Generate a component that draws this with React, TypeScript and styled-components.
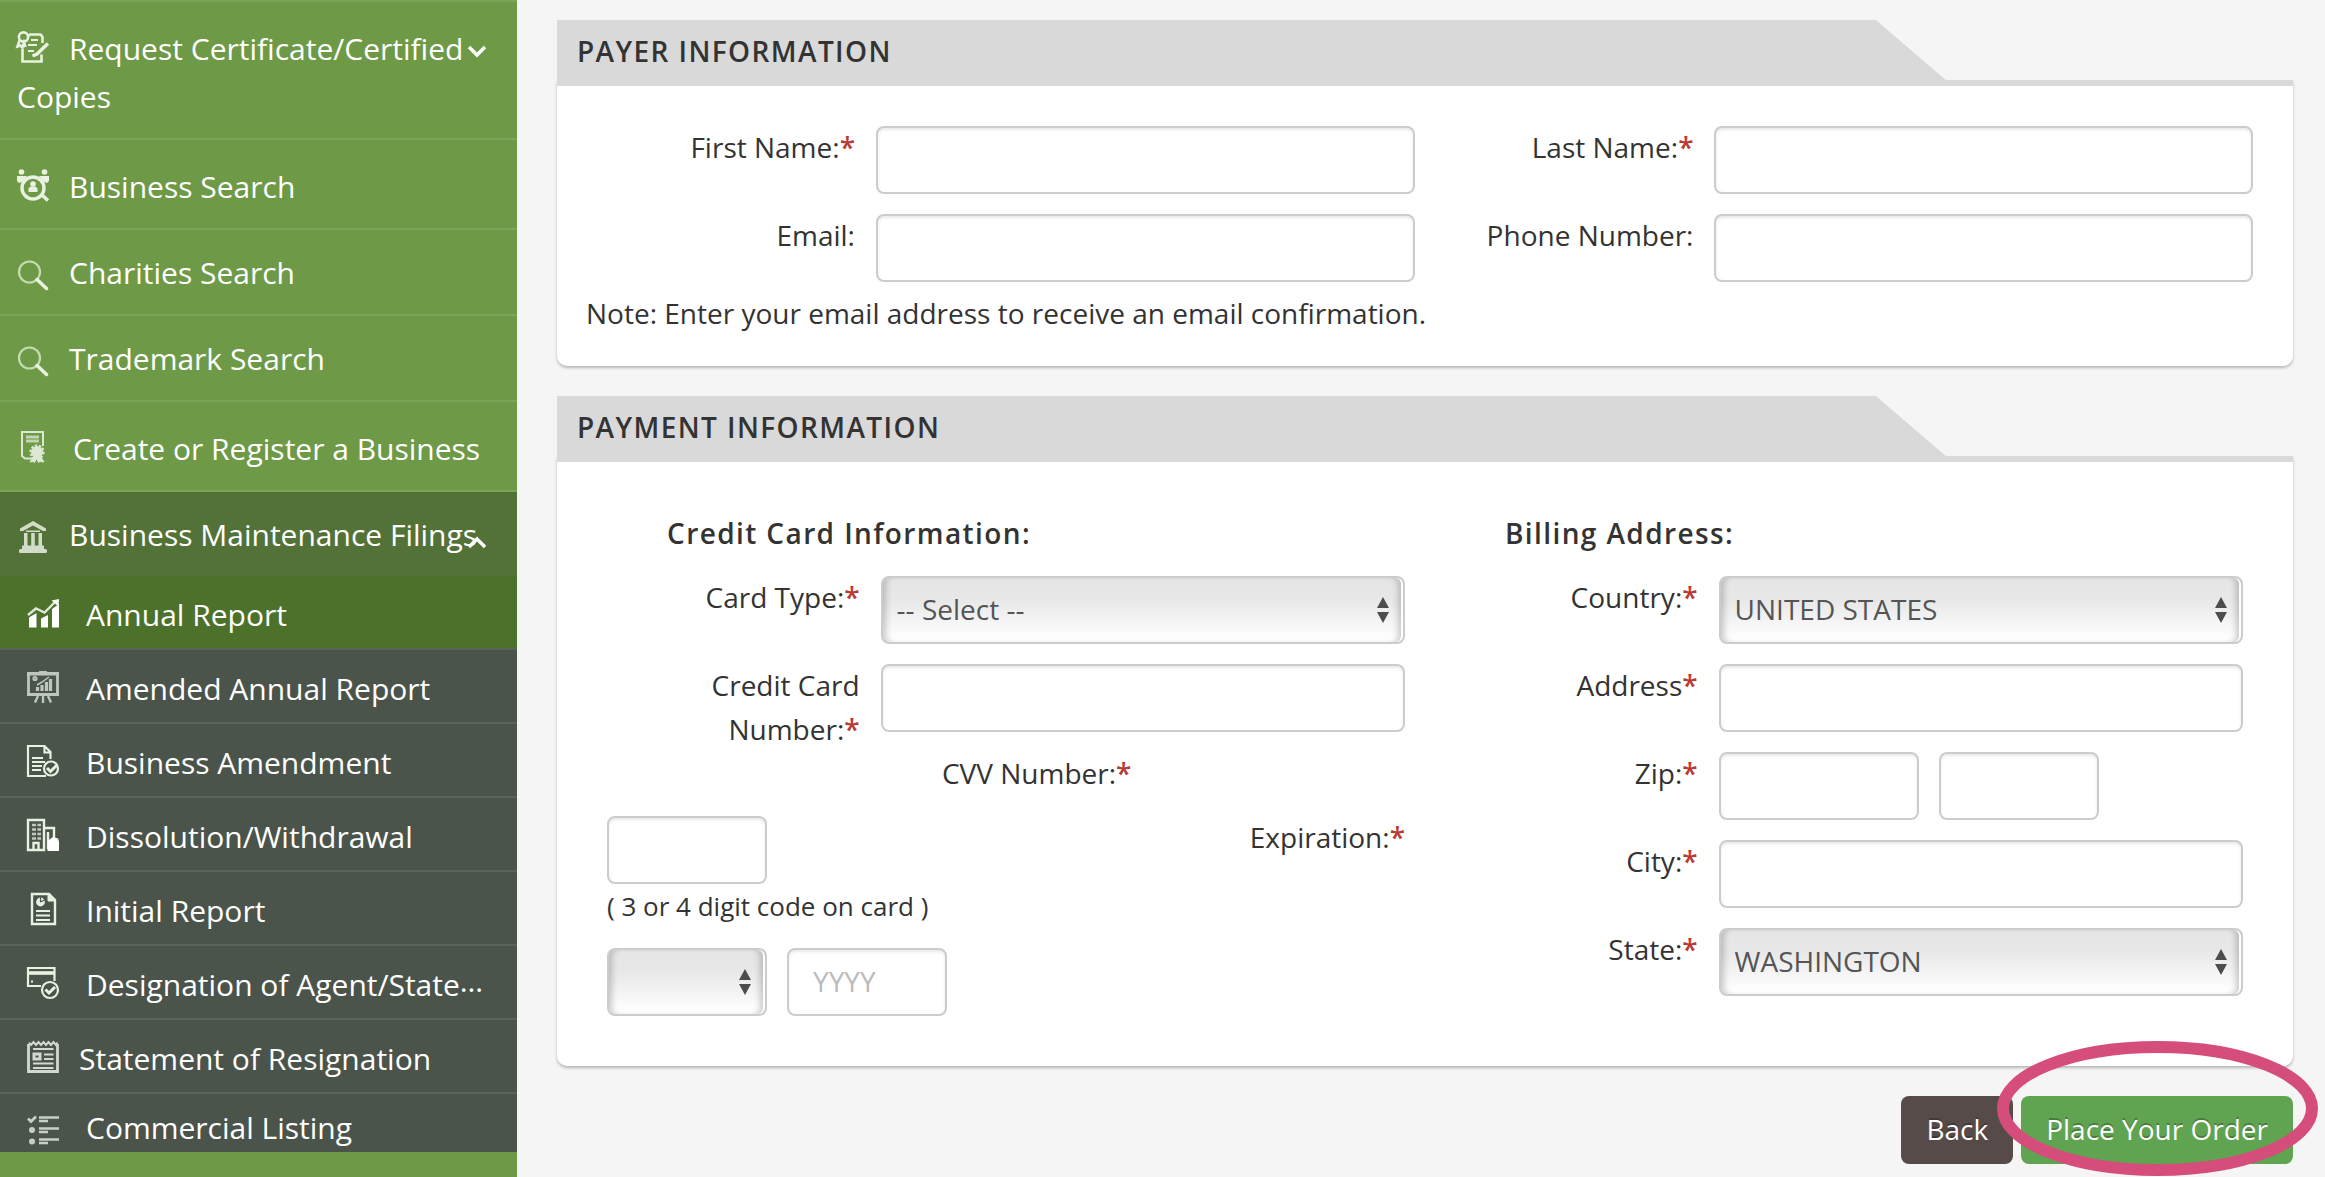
import React from 'react';
import styled, { createGlobalStyle, css } from 'styled-components';

const GlobalStyle = createGlobalStyle`
  *, *::before, *::after { box-sizing: border-box; }
  body {
    margin: 0;
    background: #f5f5f5;
    color: #333;
    font-family: 'Open Sans', 'Noto Sans', sans-serif;
    font-size: 28px;
    line-height: 44px;
  }
`;

/* ---------- Page shell ---------- */

const Page = styled.div`
  display: flex;
  min-height: 100vh;
`;

const Sidebar = styled.nav`
  flex: 0 0 517px;
  background: #6e9a47;
  border-top: 2px solid #7aa456;
`;

const Main = styled.main`
  flex: 1;
  min-width: 0;
  padding: 20px 32px 12px 40px;
`;

/* ---------- Sidebar menu ---------- */

const Menu = styled.ul`
  list-style: none;
  margin: 0;
  padding: 0;
`;

const SubMenu = styled(Menu)`
  background: #4b544b;
`;

const MenuIcon = styled.svg<{ $gap: number; $low?: boolean }>`
  display: inline-block;
  width: 32px;
  height: 32px;
  margin-right: ${(p) => p.$gap}px;
  vertical-align: ${(p) => (p.$low ? '-7px' : '-3px')};
  overflow: visible;
  color: #e9f1e0;
`;

const itemText = css`
  display: block;
  color: #fff;
  font-size: 30px;
  line-height: 48px;
  text-decoration: none;
`;

const MenuLink = styled.a<{ $tall?: boolean; $open?: boolean }>`
  ${itemText}
  position: relative;
  padding: ${(p) => (p.$tall ? '23px' : '19px')} 16px 17px 17px;
  background: ${(p) => (p.$open ? '#537238' : 'transparent')};
  border-bottom: ${(p) => (p.$open ? '0' : '2px solid #7aa456')};
`;

const SubLink = styled.a<{ $current?: boolean; $last?: boolean }>`
  ${itemText}
  padding: ${(p) => (p.$last ? '10px 16px 0 27px' : '15px 16px 9px 27px')};
  background: ${(p) => (p.$current ? '#4c712a' : 'transparent')};
  border-bottom: ${(p) => (p.$last ? '0' : '2px solid #5c655d')};
  white-space: nowrap;
`;

const Chevron = styled.svg<{ $top: number }>`
  position: absolute;
  top: ${(p) => p.$top}px;
  right: 30px;
  width: 20px;
  height: 14px;
`;

const Ellipsis = styled.span`
  vertical-align: 4px;
  line-height: 1;
`;

type IconName =
  | 'request' | 'people' | 'search' | 'certificate' | 'bank' | 'chart' | 'board'
  | 'docCheck' | 'buildings' | 'report' | 'cardCheck' | 'notepad' | 'checklist';

const drawings: Record<IconName, React.ReactNode> = {
  request: (
    <g fill="none" stroke="currentColor" strokeWidth="2.600">
      <circle cx="6.5" cy="6" r="4.6" />
      <path d="M2.5 9.5 0.5 15.5l3-1 2 2 1.500-5 1.500 4.500" />
      <path d="M12 3.500h11.500l2 2.500v6M12 3.500v2M5.500 18v12.500h19v-7" />
      <path d="M14 9h7M11 14h9M11 20h6" strokeWidth="2.200" />
      <path d="M31 12.500 20 23l-4.500 2" strokeWidth="3.400" />
    </g>
  ),
  people: (
    <g>
      <g fill="currentColor">
        <circle cx="4.500" cy="3" r="2.800" />
        <circle cx="27.500" cy="3" r="2.800" />
        <path d="M0 7h10l-5 6-3 1-2-2zM32 7H22l5 6 3 1 2-2z" />
        <circle cx="16" cy="15" r="2.800" />
        <path d="M11.500 23v-3.500l2-2h5l2 2V23z" />
      </g>
      <circle cx="16" cy="19" r="11" fill="none" stroke="currentColor" strokeWidth="3.400" />
      <path d="m25 26 6 5.500" stroke="currentColor" strokeWidth="3.500" />
    </g>
  ),
  search: (
    <g fill="none" stroke="#c5dcb2">
      <circle cx="12.500" cy="13" r="10.500" strokeWidth="2.200" />
      <path d="m20 20.500 9.500 9" strokeWidth="3.500" stroke="currentColor" strokeLinecap="round" />
    </g>
  ),
  certificate: (
    <g fill="none" stroke="currentColor" strokeWidth="2" opacity="0.9">
      <path d="M17 27.500H8l-3-2.500V1h21v14" />
      <path d="M9 6h13M9 10h13" strokeWidth="2.800" opacity="0.75" />
      <circle cx="20" cy="21" r="6" fill="currentColor" stroke="none" />
      <circle cx="20" cy="21" r="6.600" strokeDasharray="2.500 1.600" />
      <path d="m16 26-3 5 3-.5 1.500 1 2-4 2 4 1.500-1 4 .5-3-5" fill="currentColor" strokeWidth="1" />
    </g>
  ),
  bank: (
    <g fill="#d3dcc9">
      <path d="M16 0 3 7.500V10h3l10-5.500L26 10h3V7.500z" />
      <path d="M9 9.500h14v1.500H9zM7 12h3.500v13H7zM14.200 12h3.600v13h-3.600zM21.500 12H25v13h-3.500z" />
      <path d="M5 24.500h22V28H5z" />
      <rect x="2" y="28" width="28" height="4" rx="1.500" />
    </g>
  ),
  chart: (
    <g fill="#fff">
      <path d="M2 20.500 9.500 16v14.500H2zM14 21.500l7-3.500v12.500h-7zM25 12l7-5v23.500h-7z" />
      <path d="m1 18 8-6.500 8.500 4L29 4" fill="none" stroke="#dfe8d6" strokeWidth="2.400" />
      <path d="M24.500 3.500 32 2l-.5 7.500z" />
    </g>
  ),
  board: (
    <g fill="none" stroke="#bfc5bf" strokeWidth="2.800">
      <path d="M1.500 2.500h29v21h-29z" />
      <path d="M0 3h32M0 23.500h32" />
      <path d="M12 1.500h8" strokeWidth="3" />
      <path d="m11 25-3 6.500M16 25v7M21 25l3 6.500" strokeWidth="2.400" />
      <path d="M10.500 20v-4M15 20v-6M19.500 20v-9M23.500 20V8" strokeWidth="3.200" />
      <circle cx="8" cy="7.500" r="1.600" strokeWidth="2" />
      <path d="m10 14 5-3 7-5" strokeWidth="1.500" />
    </g>
  ),
  docCheck: (
    <g fill="none" stroke="currentColor" strokeWidth="2.200">
      <path d="M19 31H1V1h16.500l6 6v7M17.500 1v6.500h6" />
      <path d="M5 13h11M5 17h13M5 21h10M5 25h9" strokeWidth="1.800" />
      <circle cx="24" cy="23.500" r="7" />
      <path d="m20 23 3.500 3.500 6-6" strokeWidth="3" />
    </g>
  ),
  buildings: (
    <g fill="none" stroke="currentColor" strokeWidth="2.400">
      <path d="M1 31V1h16v30z" />
      <path d="M5 6h9M5 10.500h9M5 15h9M5 19.500h9" strokeDasharray="4 1.400" strokeWidth="2.600" opacity="0.75" />
      <path d="M6.500 31v-7h5v7" />
      <path d="M18 9h9v10M21 13v17" />
      <path d="M21 21.500 26 18l5 1.500 1 3V32H20.500v-4z" fill="#fff" stroke="none" />
    </g>
  ),
  report: (
    <g fill="none" stroke="currentColor" strokeWidth="2.400">
      <path d="M5 31V1h17l6 6v24z" />
      <path d="M21 1v7h7" fill="currentColor" strokeWidth="1" />
      <circle cx="13.500" cy="9" r="4.400" fill="currentColor" stroke="none" />
      <path d="M13.500 9V3.500M13.500 9l4-2" stroke="#4b544b" strokeWidth="1.200" />
      <path d="M9 18h14M9 22.500h14M9 27h14" strokeWidth="2" />
    </g>
  ),
  cardCheck: (
    <g fill="none" stroke="currentColor" strokeWidth="2.200">
      <path d="M14 19H1V1h26.500v13" />
      <path d="M1 6h26" strokeWidth="3.600" />
      <path d="M4 14.500h2" />
      <circle cx="23" cy="23" r="8" />
      <path d="m18.500 22.500 3.500 3.500 6-6" strokeWidth="3" />
    </g>
  ),
  notepad: (
    <g fill="none" stroke="#d4d8d2" strokeWidth="2.800">
      <path d="M1.500 3v27.500h29V3" />
      <path d="M2 1.500 4 4l2.500-3L9 4l2.500-3L14 4l2.500-3L19 4l2.500-3L24 4l2.500-3L29 4l1.500-2.500" strokeWidth="2" />
      <path d="M6 8h20.500M17 13.500h9.500M17 18h9.500M6 22.500h20.500M6 27h20.500" strokeWidth="2.200" />
      <path d="M7 13h6v5H7z" strokeWidth="3" />
    </g>
  ),
  checklist: (
    <g fill="none" stroke="#c9cec8" strokeWidth="2.800">
      <path d="m1 4.500 3 3L9 2.500" />
      <path d="M12 3.500h20M12 7h9M12 14.500h20M12 18h9M12 25.500h20M12 29h9" strokeWidth="2.600" />
      <circle cx="5" cy="16" r="1.600" />
      <circle cx="5" cy="27.500" r="1.600" />
    </g>
  ),
};

function Icon({ name, gap, low }: { name: IconName; gap: number; low?: boolean }) {
  return (
    <MenuIcon viewBox="0 0 32 32" $gap={gap} $low={low} aria-hidden="true">
      {drawings[name]}
    </MenuIcon>
  );
}

function ChevronIcon({ up }: { up?: boolean }) {
  return (
    <Chevron $top={up ? 43 : 42} viewBox="0 0 20 14" aria-hidden="true">
      <path
        d={up ? 'M2 12l8-8 8 8' : 'M2 3l8 8 8-8'}
        fill="none"
        stroke="#fff"
        strokeWidth="3.400"
      />
    </Chevron>
  );
}

type TopItem = { label: string; icon: IconName; gap: number; tall?: boolean; down?: boolean };
const topItems: TopItem[] = [
  { label: 'Request Certificate/Certified Copies', icon: 'request', gap: 20, tall: true, down: true },
  { label: 'Business Search', icon: 'people', gap: 20, tall: true },
  { label: 'Charities Search', icon: 'search', gap: 20 },
  { label: 'Trademark Search', icon: 'search', gap: 20 },
  { label: 'Create or Register a Business', icon: 'certificate', gap: 24, tall: true },
];

type SubItem = { label: string; icon: IconName; gap: number; cut?: boolean };
const subItems: SubItem[] = [
  { label: 'Annual Report', icon: 'chart', gap: 27 },
  { label: 'Amended Annual Report', icon: 'board', gap: 27 },
  { label: 'Business Amendment', icon: 'docCheck', gap: 27 },
  { label: 'Dissolution/Withdrawal', icon: 'buildings', gap: 27 },
  { label: 'Initial Report', icon: 'report', gap: 27 },
  { label: 'Designation of Agent/State', icon: 'cardCheck', gap: 27, cut: true },
  { label: 'Statement of Resignation', icon: 'notepad', gap: 20 },
  { label: 'Commercial Listing', icon: 'checklist', gap: 27 },
];

/* ---------- Panels ---------- */

const Panel = styled.section`
  margin-bottom: 30px;
`;

const PanelTab = styled.h2`
  width: 80%;
  margin: 0;
  padding: 9px 20px 7px;
  background: #d9d9d9;
  clip-path: polygon(0 0, calc(100% - 70px) 0, 100% 100%, 0 100%);
  font-size: 28px;
  font-weight: 600;
  line-height: 44px;
  letter-spacing: 0.05em;
  text-transform: uppercase;
`;

const PanelBody = styled.div<{ $pad: string }>`
  padding: ${(p) => p.$pad};
  background: #fff;
  border-top: 6px solid #d9d9d9;
  border-radius: 0 0 10px 10px;
  box-shadow: 0 2px 3px rgba(0, 0, 0, 0.25);
`;

const Columns = styled.div<{ $gap: number }>`
  display: grid;
  grid-template-columns: 1fr 1fr;
  column-gap: ${(p) => p.$gap}px;
  align-items: start;
`;

const Stack = styled.div`
  display: grid;
  row-gap: 20px;
`;

const Field = styled.div<{ $cols: string }>`
  display: grid;
  grid-template-columns: ${(p) => p.$cols};
  align-items: start;
`;

const Label = styled.label<{ $flush?: boolean }>`
  margin-top: -1px;
  padding: 0 ${(p) => (p.$flush ? 0 : 21)}px 1px 0;
  text-align: right;
`;

const Required = styled.span`
  color: #b83c36;
  font-weight: 600;
`;

const control = css`
  display: block;
  height: 68px;
  margin: 0;
  border: 2px solid #ccc;
  border-radius: 8px;
  font: inherit;
  color: #555;
`;

const TextInput = styled.input<{ $width?: string }>`
  ${control}
  width: ${(p) => p.$width ?? '100%'};
  padding: 0 24px 2px;
  background: #fff;
  box-shadow: inset 0 2px 3px rgba(0, 0, 0, 0.09);
  &::placeholder { color: #bbb; opacity: 1; }
`;

const SelectBox = styled.div<{ $width?: string }>`
  position: relative;
  width: ${(p) => p.$width ?? '100%'};
`;

const Select = styled.select`
  ${control}
  width: 100%;
  padding: 0 40px 2px 14px;
  appearance: none;
  background: linear-gradient(#e5e5e5 0%, #e8e8e8 35%, #fdfdfd 90%);
  box-shadow: inset -2px 0 0 #fff, inset 7px 0 6px -4px rgba(0, 0, 0, 0.2),
    inset -9px 0 6px -4px rgba(0, 0, 0, 0.2);
`;

const Arrows = styled.svg`
  position: absolute;
  top: 21px;
  right: 15px;
  width: 14px;
  height: 26px;
  pointer-events: none;
`;

const Note = styled.p`
  margin: 9px 0 0;
`;

const GroupTitle = styled.h3`
  margin: 0 0 21px;
  padding-left: 60px;
  font-size: 28px;
  font-weight: 600;
  line-height: 44px;
  letter-spacing: 0.05em;
`;

const Inline = styled.div`
  display: flex;
  gap: 20px;
`;

const CodeRow = styled.div`
  display: flex;
  justify-content: space-between;
  align-items: flex-start;
  margin-top: 20px;
`;

const Hint = styled.p`
  margin: 0 0 20px;
  font-size: 26px;
`;

/* ---------- Footer actions ---------- */

const Actions = styled.div`
  position: relative;
  display: flex;
  justify-content: flex-end;
  gap: 8px;
`;

const Button = styled.button<{ $primary?: boolean }>`
  height: 68px;
  padding: 0 25px 2px;
  border: 0;
  border-radius: 8px;
  background: ${(p) => (p.$primary ? '#60a451' : '#564b49')};
  color: #fff;
  font: inherit;
  text-shadow: 0 -2px 0 rgba(0, 0, 0, 0.25);
`;

const Highlight = styled.svg`
  position: absolute;
  top: -55px;
  right: -25px;
  width: 321px;
  height: 135px;
  pointer-events: none;
`;

const payerCols = '7fr 13fr';
const paymentCols = '12fr 23fr';

type FieldProps = {
  id: string;
  text: string;
  required?: boolean;
  cols: string;
  children?: React.ReactNode;
};

function Row({ id, text, required, cols, children }: FieldProps) {
  return (
    <Field $cols={cols}>
      <Label htmlFor={id}>
        {text}
        {required && <Required>*</Required>}
      </Label>
      {children ?? <TextInput id={id} type="text" />}
    </Field>
  );
}

type DropDownProps = { id: string; options: string[]; width?: string; label?: string };

function DropDown({ id, options, width, label }: DropDownProps) {
  return (
    <SelectBox $width={width}>
      <Select id={id} aria-label={label}>
        {options.map((o) => (
          <option key={o}>{o}</option>
        ))}
      </Select>
      <Arrows viewBox="0 0 14 26" aria-hidden="true">
        <path d="M7 0l6 11H1zM7 26l6-11H1z" fill="#4d4d4d" />
      </Arrows>
    </SelectBox>
  );
}

export default function App() {
  return (
    <Page>
      <GlobalStyle />
      <Sidebar>
        <Menu>
          {topItems.map((item) => (
            <li key={item.label}>
              <MenuLink href="#" $tall={item.tall}>
                <Icon name={item.icon} gap={item.gap} low={!item.tall} />
                {item.label}
                {item.down && <ChevronIcon />}
              </MenuLink>
            </li>
          ))}
          <li>
            <MenuLink href="#" $open>
              <Icon name="bank" gap={20} low />
              Business Maintenance Filings
              <ChevronIcon up />
            </MenuLink>
            <SubMenu>
              {subItems.map((item, i) => {
                const last = i === subItems.length - 1;
                return (
                  <li key={item.label}>
                    <SubLink href="#" $current={i === 0} $last={last}>
                      <Icon name={item.icon} gap={item.gap} low={last} />
                      {item.label}
                      {item.cut && <Ellipsis>…</Ellipsis>}
                    </SubLink>
                  </li>
                );
              })}
            </SubMenu>
          </li>
        </Menu>
      </Sidebar>

      <Main>
        <Panel>
          <PanelTab>Payer Information</PanelTab>
          <PanelBody $pad="40px 40px 31px 29px">
            <Columns $gap={10}>
              <Stack>
                <Row id="first" text="First Name:" required cols={payerCols} />
                <Row id="email" text="Email:" cols={payerCols} />
              </Stack>
              <Stack>
                <Row id="last" text="Last Name:" required cols={payerCols} />
                <Row id="phone" text="Phone Number:" cols={payerCols} />
              </Stack>
            </Columns>
            <Note>Note: Enter your email address to receive an email confirmation.</Note>
          </PanelBody>
        </Panel>

        <Panel>
          <PanelTab>Payment Information</PanelTab>
          <PanelBody $pad="49px 50px 50px 50px">
            <Columns $gap={40}>
              <div>
                <GroupTitle>Credit Card Information:</GroupTitle>
                <Stack>
                  <Row id="cardType" text="Card Type:" required cols={paymentCols}>
                    <DropDown id="cardType" options={['-- Select --']} />
                  </Row>
                  <Row id="cardNumber" text="Credit Card Number:" required cols={paymentCols} />
                </Stack>
                <Field $cols="23fr 12fr">
                  <Label htmlFor="cvv" $flush>
                    CVV Number:<Required>*</Required>
                  </Label>
                </Field>
                <CodeRow>
                  <TextInput id="cvv" type="text" $width="160px" />
                  <Label htmlFor="month" $flush>
                    Expiration:<Required>*</Required>
                  </Label>
                </CodeRow>
                <Hint>( 3 or 4 digit code on card )</Hint>
                <Inline>
                  <DropDown id="month" options={['']} width="160px" />
                  <TextInput type="text" placeholder="YYYY" aria-label="Expiration year" $width="160px" />
                </Inline>
              </div>
              <div>
                <GroupTitle>Billing Address:</GroupTitle>
                <Stack>
                  <Row id="country" text="Country:" required cols={paymentCols}>
                    <DropDown id="country" options={['UNITED STATES']} />
                  </Row>
                  <Row id="address" text="Address" required cols={paymentCols} />
                  <Row id="zip" text="Zip:" required cols={paymentCols}>
                    <Inline>
                      <TextInput id="zip" type="text" $width="200px" />
                      <TextInput type="text" aria-label="Zip extension" $width="160px" />
                    </Inline>
                  </Row>
                  <Row id="city" text="City:" required cols={paymentCols} />
                  <Row id="state" text="State:" required cols={paymentCols}>
                    <DropDown id="state" options={['WASHINGTON']} />
                  </Row>
                </Stack>
              </div>
            </Columns>
          </PanelBody>
        </Panel>

        <Actions>
          <Button type="button">Back</Button>
          <Button type="submit" $primary>Place Your Order</Button>
          <Highlight viewBox="0 0 321 135" aria-hidden="true">
            <ellipse cx="160.500" cy="67.500" rx="154.500" ry="61.500" fill="none" stroke="#d54d7b" strokeWidth="12" />
          </Highlight>
        </Actions>
      </Main>
    </Page>
  );
}
